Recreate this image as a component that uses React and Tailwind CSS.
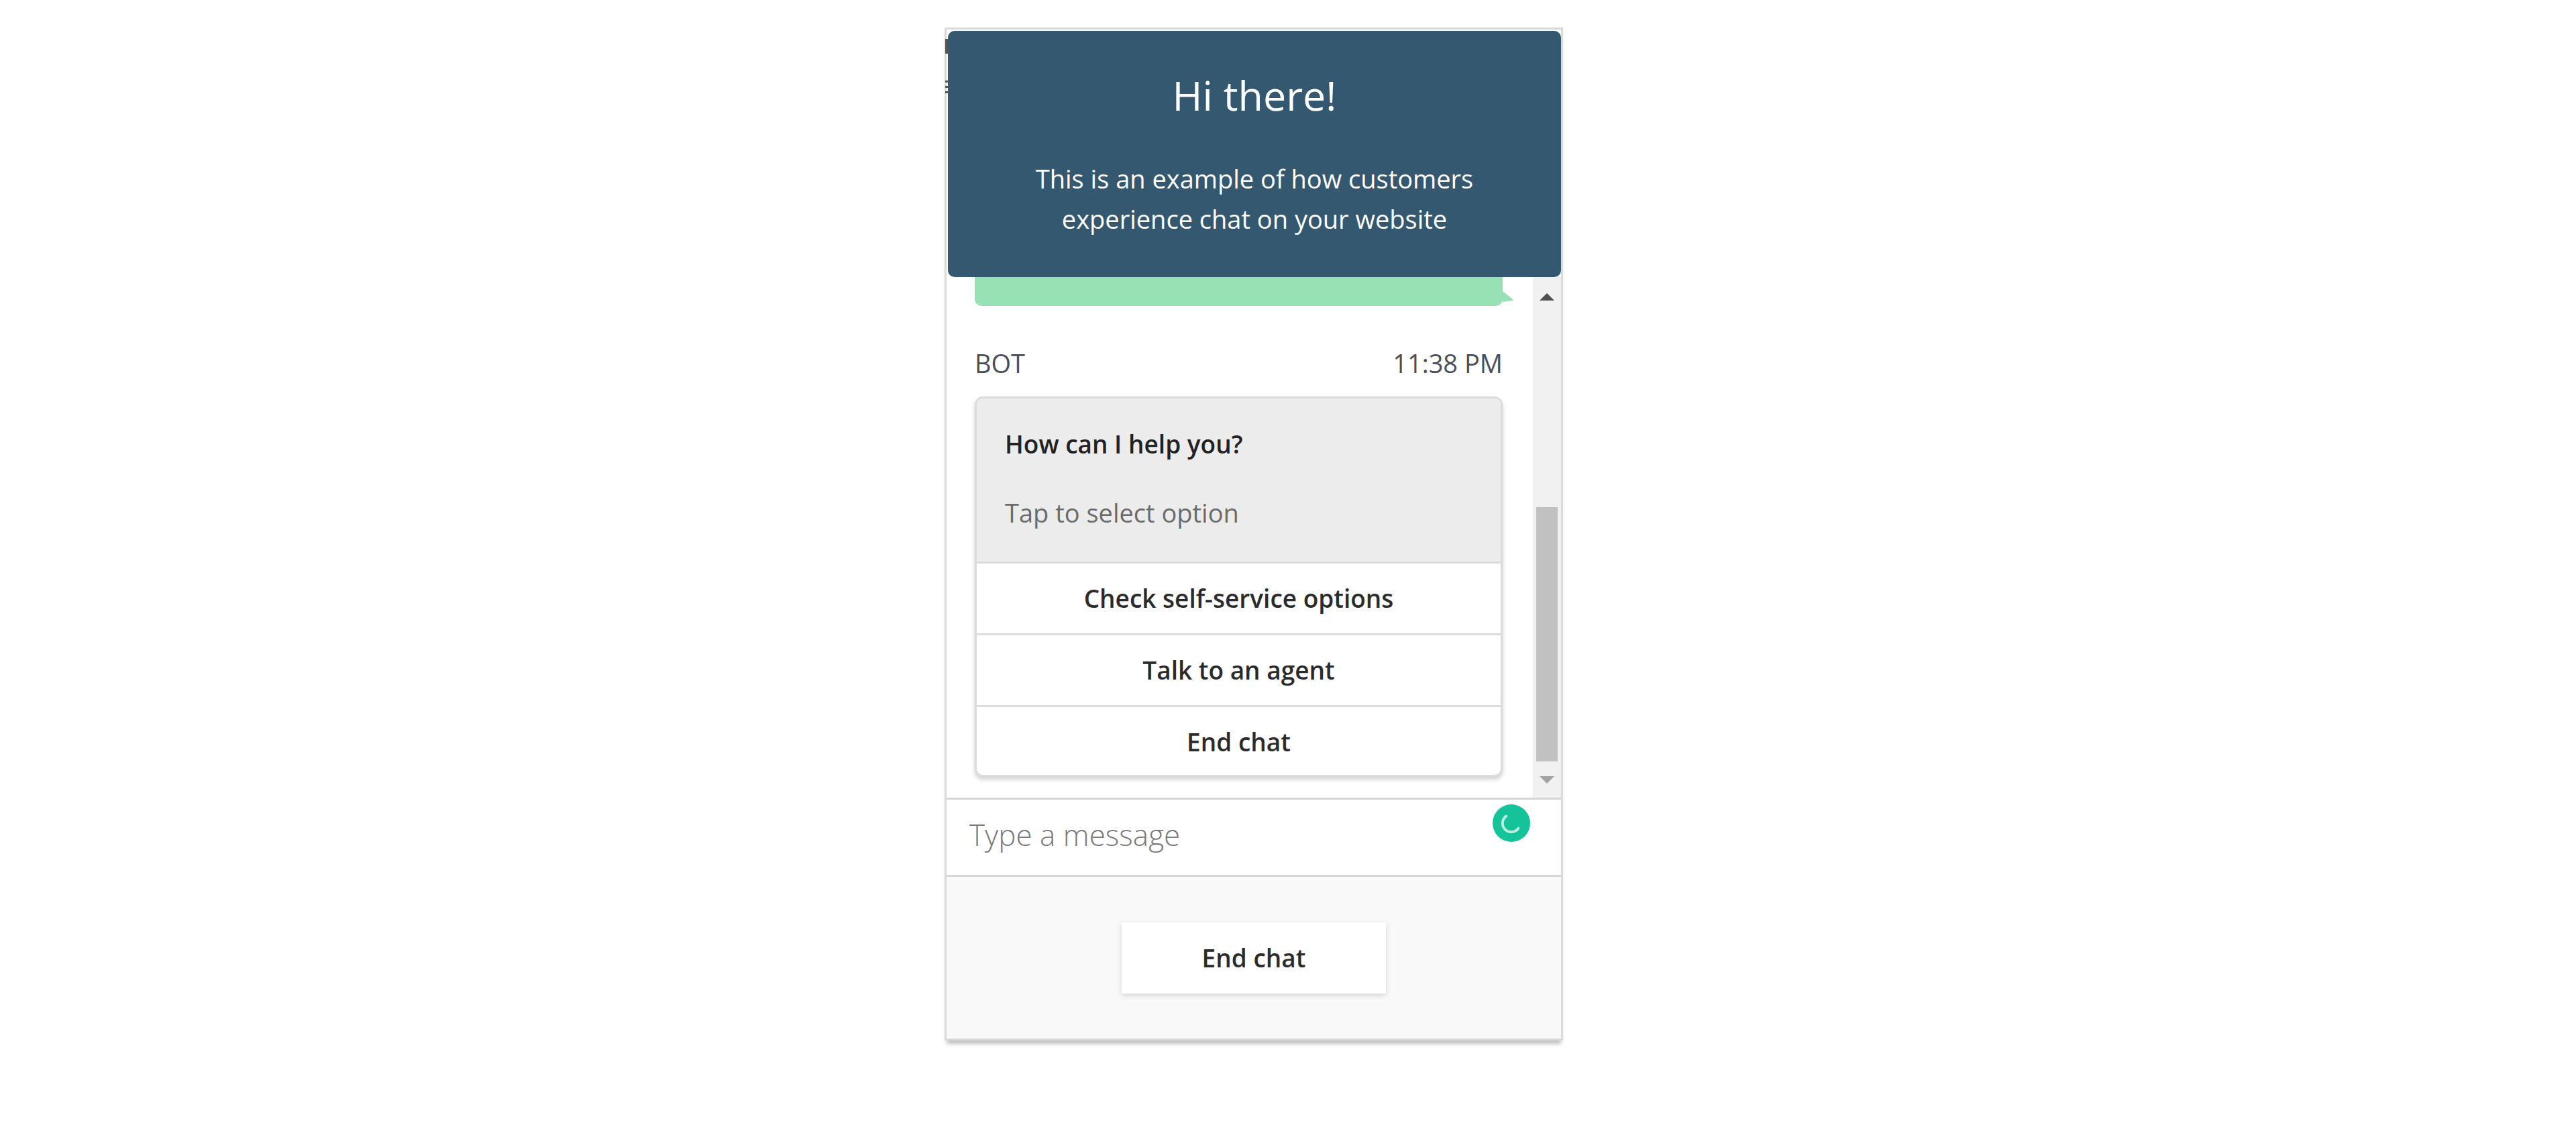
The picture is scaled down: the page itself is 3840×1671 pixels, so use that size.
import React from "react";

const font = { fontFamily: '"Open Sans", "Noto Sans", sans-serif' };

const options = ["Check self-service options", "Talk to an agent", "End chat"];

function Arrow({ up, color }) {
  return (
    <svg width="22" height="11" viewBox="0 0 22 11">
      <polygon points={up ? "0,11 11,0 22,11" : "0,0 22,0 11,11"} fill={color} />
    </svg>
  );
}

function GrammarlyDot() {
  return (
    <svg width="56" height="56" viewBox="0 0 56 56">
      <circle cx="28" cy="28" r="28" fill="#15c39a" />
      <path d="M20.4 17.5 A13 13 0 1 0 38.5 35.6" fill="none" stroke="#ffffff" strokeOpacity="0.7" strokeWidth="4" strokeLinecap="round" />
    </svg>
  );
}

export default function App() {
  return (
    <div className="min-h-screen w-full bg-white pl-[1408px] pt-[41px]" style={font}>
      <div className="relative flex h-[1510px] w-[922px] flex-col border-[3px] border-[#dadada] bg-white shadow-[0_8px_6px_-3px_rgba(0,0,0,0.25)]">
        {/* page text peeking out behind the widget */}
        <span className="absolute left-[-2px] top-[14px] h-[22px] w-[4px] bg-[#555]" />
        <span className="absolute left-[-2px] top-[76px] flex w-[6px] flex-col gap-[5px]">
          <span className="h-[3px] bg-[#555]" />
          <span className="h-[3px] bg-[#555]" />
          <span className="h-[3px] bg-[#555]" />
        </span>

        {/* header */}
        <div className="relative z-10 ml-[2px] mt-[2px] h-[367px] shrink-0 rounded-[10px] bg-[#355871] px-10 pt-[60px] text-center text-white">
          <h1 className="text-[61px] leading-[72px] font-normal">Hi there!</h1>
          <p className="mx-auto mt-[58px] w-[720px] text-[38px] leading-[60px]">
            This is an example of how customers experience chat on your website
          </p>
        </div>

        {/* transcript */}
        <div className="flex h-[776px] shrink-0">
          <div className="flex flex-1 flex-col justify-end overflow-hidden pb-[31px] pl-[42px] pr-[45px]">
            <div className="relative h-[160px] shrink-0 rounded-b-[10px] bg-[#97e1b4]">
              <svg className="absolute bottom-[6px] left-full" width="16" height="16" viewBox="0 0 16 16">
                <polygon points="0,0 16,13 16,14 0,16" fill="#97e1b4" />
              </svg>
            </div>
            <div className="mt-[59px] flex h-[52px] shrink-0 items-center justify-between text-[38px] text-[#4a4f57]">
              <span>BOT</span>
              <span>11:38 PM</span>
            </div>
            <div className="mt-[24px] h-[567px] shrink-0 overflow-hidden rounded-[12px] border-[3px] border-[#dcdcdc] bg-white shadow-[0_4px_6px_rgba(0,0,0,0.18)]">
              <div className="h-[243px] bg-[#ececec] pl-[42px] pt-[43px]">
                <p className="text-[37px] leading-[50px] font-semibold text-[#222]">How can I help you?</p>
                <p className="mt-[52px] text-[38px] leading-[50px] text-[#6b6b6b]">Tap to select option</p>
              </div>
              {options.map((label) => (
                <div
                  key={label}
                  className="flex h-[107px] items-center justify-center border-t-[3px] border-[#dcdcdc] text-[37px] font-semibold text-[#2b2b2b]"
                >
                  {label}
                </div>
              ))}
            </div>
          </div>

          {/* scrollbar */}
          <div className="flex w-[42px] shrink-0 flex-col bg-[#f1f1f1]">
            <div className="flex h-[58px] items-center justify-center">
              <Arrow up color="#505050" />
            </div>
            <div className="flex-1 px-[5px] pt-[285px]">
              <div className="h-[379px] bg-[#c1c1c1]" />
            </div>
            <div className="flex h-[54px] items-center justify-center">
              <Arrow color="#a3a3a3" />
            </div>
          </div>
        </div>

        {/* message input */}
        <div className="relative flex h-[115px] shrink-0 items-center border-t-[3px] border-[#d6d6d6] pb-[8px] pl-[34px]">
          <span className="text-[44px] font-light text-[#7a7a7a]">Type a message</span>
          <span className="absolute right-[46px] top-[7px]">
            <GrammarlyDot />
          </span>
        </div>

        {/* footer */}
        <div className="flex h-[244px] shrink-0 justify-center border-t-[3px] border-[#d6d6d6] bg-[#f9f9f9] pt-[68px]">
          <button className="flex h-[106px] w-[394px] items-center justify-center bg-white text-[37px] font-semibold text-[#2b2b2b] shadow-[0_3px_8px_rgba(0,0,0,0.15)]">
            End chat
          </button>
        </div>
      </div>
    </div>
  );
}
